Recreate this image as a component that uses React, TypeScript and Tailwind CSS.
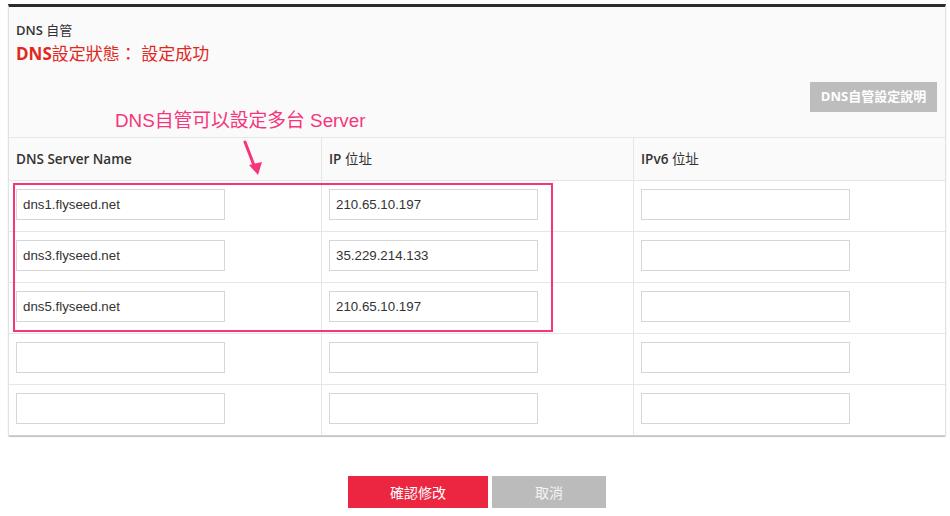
import React from "react";

type Row = { name: string; ip: string; ipv6: string };

const rows: Row[] = [
  { name: "dns1.flyseed.net", ip: "210.65.10.197", ipv6: "" },
  { name: "dns3.flyseed.net", ip: "35.229.214.133", ipv6: "" },
  { name: "dns5.flyseed.net", ip: "210.65.10.197", ipv6: "" },
  { name: "", ip: "", ipv6: "" },
  { name: "", ip: "", ipv6: "" },
];

const sans = "font-['Open_Sans','Noto_Sans_CJK_TC',sans-serif]";

function Field({ value }: { value: string }) {
  return (
    <input
      readOnly
      value={value}
      className="h-[31px] w-[209px] border border-[#d6d6d6] bg-white px-[6px] font-['Liberation_Sans','Noto_Sans_CJK_TC',sans-serif] text-[13.3px] text-[#333] outline-none"
    />
  );
}

export default function App() {
  return (
    <div className={`relative h-[516px] w-[950px] bg-white ${sans}`}>
      <div className="pl-[8px] pr-[4px] pt-[4px]">
        <div className="overflow-hidden rounded-b-[2px] border-x border-b border-t-[3px] border-x-[#e2e2e2] border-b-[#cfcfcf] border-t-[#2b2b2b] shadow-[0_1px_1px_rgba(0,0,0,0.25)]">
          <div className="bg-[#fafafa] px-[7px] pb-[25px] pt-[13px]">
            <div className="text-[13px] font-semibold leading-[20px] text-[#333]">
              DNS <span className="font-normal">自管</span>
            </div>
            <div className="mt-[2px] text-[17px] leading-[24px] text-[#e0281e]">
              <span className="font-bold">DNS</span>設定狀態： 設定成功
            </div>
            <div className="mt-[16px] flex justify-end pr-[1px]">
              <button className="h-[30px] w-[127px] bg-[#bdbdbd] text-[13px] font-bold text-white">
                DNS自管設定說明
              </button>
            </div>
          </div>

          <div className="grid grid-cols-3 border-t border-[#e6e6e6] bg-[#fafafa]">
            {["DNS Server Name", "IP 位址", "IPv6 位址"].map((h, i) => (
              <div
                key={h}
                className={`flex h-[42px] items-center px-[7px] text-[13.5px] text-[#333] ${i > 0 ? "border-l border-[#e6e6e6]" : ""}`}
              >
                {h === "DNS Server Name" ? (
                  <span className="font-semibold">{h}</span>
                ) : (
                  <span>
                    <span className="font-semibold">{h.split(" ")[0]}</span> {h.split(" ")[1]}
                  </span>
                )}
              </div>
            ))}
          </div>

          {rows.map((r, idx) => (
            <div key={idx} className="grid grid-cols-3 border-t border-[#e6e6e6] bg-white">
              <div className="flex h-[50px] items-start px-[7px] pt-[8px]">
                <Field value={r.name} />
              </div>
              <div className="flex h-[50px] items-start border-l border-[#e6e6e6] px-[7px] pt-[8px]">
                <Field value={r.ip} />
              </div>
              <div className="flex h-[50px] items-start border-l border-[#e6e6e6] px-[7px] pt-[8px]">
                <Field value={r.ipv6} />
              </div>
            </div>
          ))}
        </div>
      </div>

      <div className="mt-[40px] flex justify-center gap-[4px] pl-[4px]">
        <button className="h-[32px] w-[140px] bg-[#ec2540] text-[14px] text-white">確認修改</button>
        <button className="h-[32px] w-[114px] bg-[#bbbbbb] text-[14px] text-[#f3f3f3]">取消</button>
      </div>

      {/* annotation */}
      <div className="absolute left-[115px] top-[108px] font-['Liberation_Sans','Noto_Sans_CJK_TC',sans-serif] text-[18.8px] leading-[26px] text-[#f5357c]">
        DNS自管可以設定多台 Server
      </div>
      <svg className="absolute left-[238px] top-[138px]" width="30" height="42" viewBox="0 0 30 42">
        <line x1="7" y1="4" x2="17" y2="30" stroke="#f5357c" strokeWidth="3" strokeLinecap="round" />
        <polygon points="11,27 24,24 20,37" fill="#f5357c" />
      </svg>
      <div className="pointer-events-none absolute left-[13px] top-[183px] h-[149px] w-[540px] border-2 border-[#f5357c]" />
    </div>
  );
}
